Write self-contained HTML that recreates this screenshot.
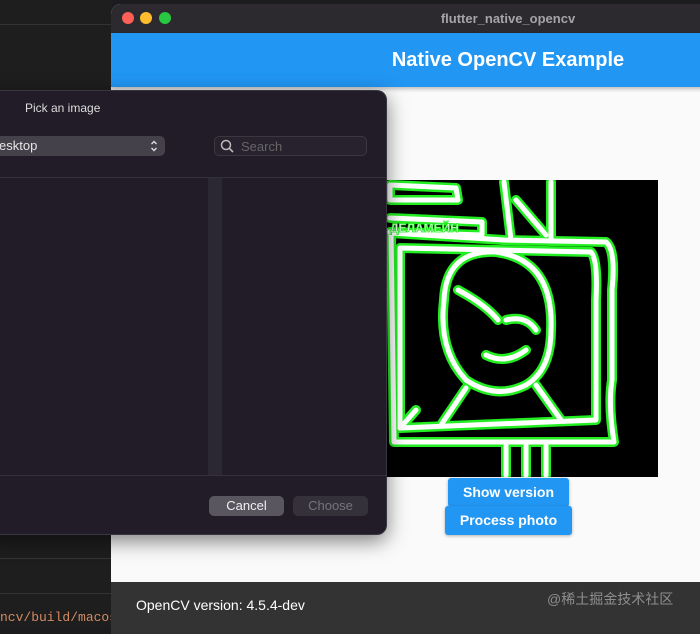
<!DOCTYPE html>
<html><head><meta charset="utf-8"><style>
*{margin:0;padding:0;box-sizing:border-box}
body{width:700px;height:627px;overflow:hidden;background:#1c1c1e;font-family:"Liberation Sans","Noto Sans CJK SC",sans-serif;position:relative}
.abs{position:absolute}
</style></head><body>
<div class="abs" style="left:0;top:0;width:112px;height:627px;background:#1e1e1e"></div>
<div class="abs" style="left:0;top:24px;width:112px;height:1px;background:#333"></div>
<div class="abs" style="left:0;top:558px;width:112px;height:1px;background:#333"></div>
<div class="abs" style="left:0;top:593px;width:112px;height:1px;background:#333"></div>
<div class="abs" style="left:0;top:610px;font:13px 'Liberation Mono',monospace;color:#d38b63;white-space:nowrap">ncv/build/macos/</div>

<div class="abs" style="left:111px;top:4px;width:600px;height:630px;border-radius:10px 0 0 0;overflow:hidden;background:#fafafa">
  <div class="abs" style="left:0;top:0;width:600px;height:29px;background:#2c2a2f"></div>
  <div class="abs" style="left:11px;top:8px;width:12px;height:12px;border-radius:50%;background:#fe5f57"></div>
  <div class="abs" style="left:29px;top:8px;width:12px;height:12px;border-radius:50%;background:#febc2e"></div>
  <div class="abs" style="left:48px;top:8px;width:12px;height:12px;border-radius:50%;background:#28c840"></div>
  <div class="abs" style="left:250px;top:7px;width:294px;text-align:center;font-size:13px;font-weight:bold;color:#a5a4a8">flutter_native_opencv</div>
  <div class="abs" style="left:0;top:29px;width:600px;height:54px;background:#2196f3;box-shadow:0 2px 4px rgba(0,0,0,.25)"></div>
  <div class="abs" style="left:250px;top:45px;width:294px;text-align:center;font-size:20px;font-weight:bold;color:#fff">Native OpenCV Example</div>
  <div class="abs" style="left:0;top:578px;width:600px;height:52px;background:#333"></div>
  <div class="abs" style="left:25px;top:593px;font-size:14px;color:#fff">OpenCV version: 4.5.4-dev</div>
  <div class="abs" style="left:436px;top:585px;font-size:14px;color:#8e8e8e">@稀土掘金技术社区</div>
</div>

<svg class="abs" style="left:386px;top:180px" width="272" height="297" viewBox="0 0 272 297">
<rect width="272" height="297" fill="#000"/>
<g fill="none" stroke-linejoin="round" stroke-linecap="round">
<g stroke="#22ee22" stroke-width="10">
<path d="M5 53 L118 60 L220 62 Q230 70 226 110 L226 200 Q222 225 228 262 L8 262 Z"/>
<path d="M14 68 L205 72 Q212 80 210 120 L210 240 L14 248 Z"/>
<path d="M110 72 Q60 70 58 120 Q52 170 80 200 Q110 220 140 205 Q165 190 165 150 Q168 80 110 72 Z"/>
<path d="M72 110 Q100 125 112 140 M120 140 Q140 135 150 150 M100 175 Q120 185 140 170"/>
<path d="M118 2 L125 60 M165 2 L165 60 M130 20 L160 55"/>
<path d="M120 262 L120 295 M140 262 L140 295 M160 262 L160 295"/>
<path d="M4 5 L70 8 L72 20 L4 20 Z M4 38 L96 42 L96 55 L4 52"/>
<path d="M80 208 L55 245 M150 205 L175 240 M30 230 L14 248"/>
</g>
<g stroke="#fff" stroke-width="5">
<path d="M5 53 L118 60 L220 62 Q230 70 226 110 L226 200 Q222 225 228 262 L8 262 Z"/>
<path d="M14 68 L205 72 Q212 80 210 120 L210 240 L14 248 Z"/>
<path d="M110 72 Q60 70 58 120 Q52 170 80 200 Q110 220 140 205 Q165 190 165 150 Q168 80 110 72 Z"/>
<path d="M72 110 Q100 125 112 140 M120 140 Q140 135 150 150 M100 175 Q120 185 140 170"/>
<path d="M118 2 L125 60 M165 2 L165 60 M130 20 L160 55"/>
<path d="M120 262 L120 295 M140 262 L140 295 M160 262 L160 295"/>
<path d="M4 5 L70 8 L72 20 L4 20 Z M4 38 L96 42 L96 55 L4 52"/>
<path d="M80 208 L55 245 M150 205 L175 240 M30 230 L14 248"/>
</g>
</g>
<text x="4" y="52" font-family="Liberation Sans" font-weight="bold" font-size="12" fill="#fff" stroke="#2e2" stroke-width="0.8">ДЕЛАМЕЙН</text>
</svg>

<div class="abs" style="left:448px;top:478px;width:121px;height:29px;background:#2196f3;border-radius:3px;box-shadow:0 1px 3px rgba(0,0,0,.3);color:#fff;font-size:14px;font-weight:bold;text-align:center;line-height:29px">Show version</div>
<div class="abs" style="left:445px;top:506px;width:127px;height:29px;background:#2196f3;border-radius:3px;box-shadow:0 1px 3px rgba(0,0,0,.3);color:#fff;font-size:14px;font-weight:bold;text-align:center;line-height:29px">Process photo</div>

<div class="abs" style="left:-20px;top:90px;width:407px;height:445px;background:#211c27;border-radius:10px;border:1px solid #3a3640;box-shadow:0 6px 20px rgba(0,0,0,.5);overflow:hidden">
  <div class="abs" style="left:44px;top:10px;font-size:12px;color:#ddd">Pick an image</div>
  <div class="abs" style="left:0;top:45px;width:184px;height:20px;background:#45414b;border-radius:5px"></div>
  <div class="abs" style="left:18px;top:47px;font-size:13px;color:#e6e6e6">esktop</div>
  <svg class="abs" style="left:169px;top:48px" width="8" height="14" viewBox="0 0 8 14"><path d="M1.5 5 L4 2.5 L6.5 5 M1.5 9 L4 11.5 L6.5 9" fill="none" stroke="#ddd" stroke-width="1.4"/></svg>
  <div class="abs" style="left:233px;top:45px;width:153px;height:20px;border:1px solid #3b3742;border-radius:5px;background:#27222d"></div>
  <svg class="abs" style="left:239px;top:48px" width="14" height="14" viewBox="0 0 14 14"><circle cx="6" cy="6" r="4.5" fill="none" stroke="#bbb" stroke-width="1.5"/><path d="M9.2 9.2 L13 13" stroke="#bbb" stroke-width="1.6"/></svg>
  <div class="abs" style="left:260px;top:48px;font-size:13px;color:#666">Search</div>
  <div class="abs" style="left:0;top:86px;width:407px;height:1px;background:#35313c"></div>
  <div class="abs" style="left:227px;top:87px;width:14px;height:297px;background:#2c2833"></div>
  <div class="abs" style="left:0;top:384px;width:407px;height:1px;background:#35313c"></div>
  <div class="abs" style="left:228px;top:405px;width:75px;height:20px;background:#5a5660;border-radius:5px;color:#eee;font-size:13px;text-align:center;line-height:20px">Cancel</div>
  <div class="abs" style="left:312px;top:405px;width:75px;height:20px;background:#35313b;border-radius:5px;color:#77737c;font-size:13px;text-align:center;line-height:20px">Choose</div>
</div>
</body></html>
